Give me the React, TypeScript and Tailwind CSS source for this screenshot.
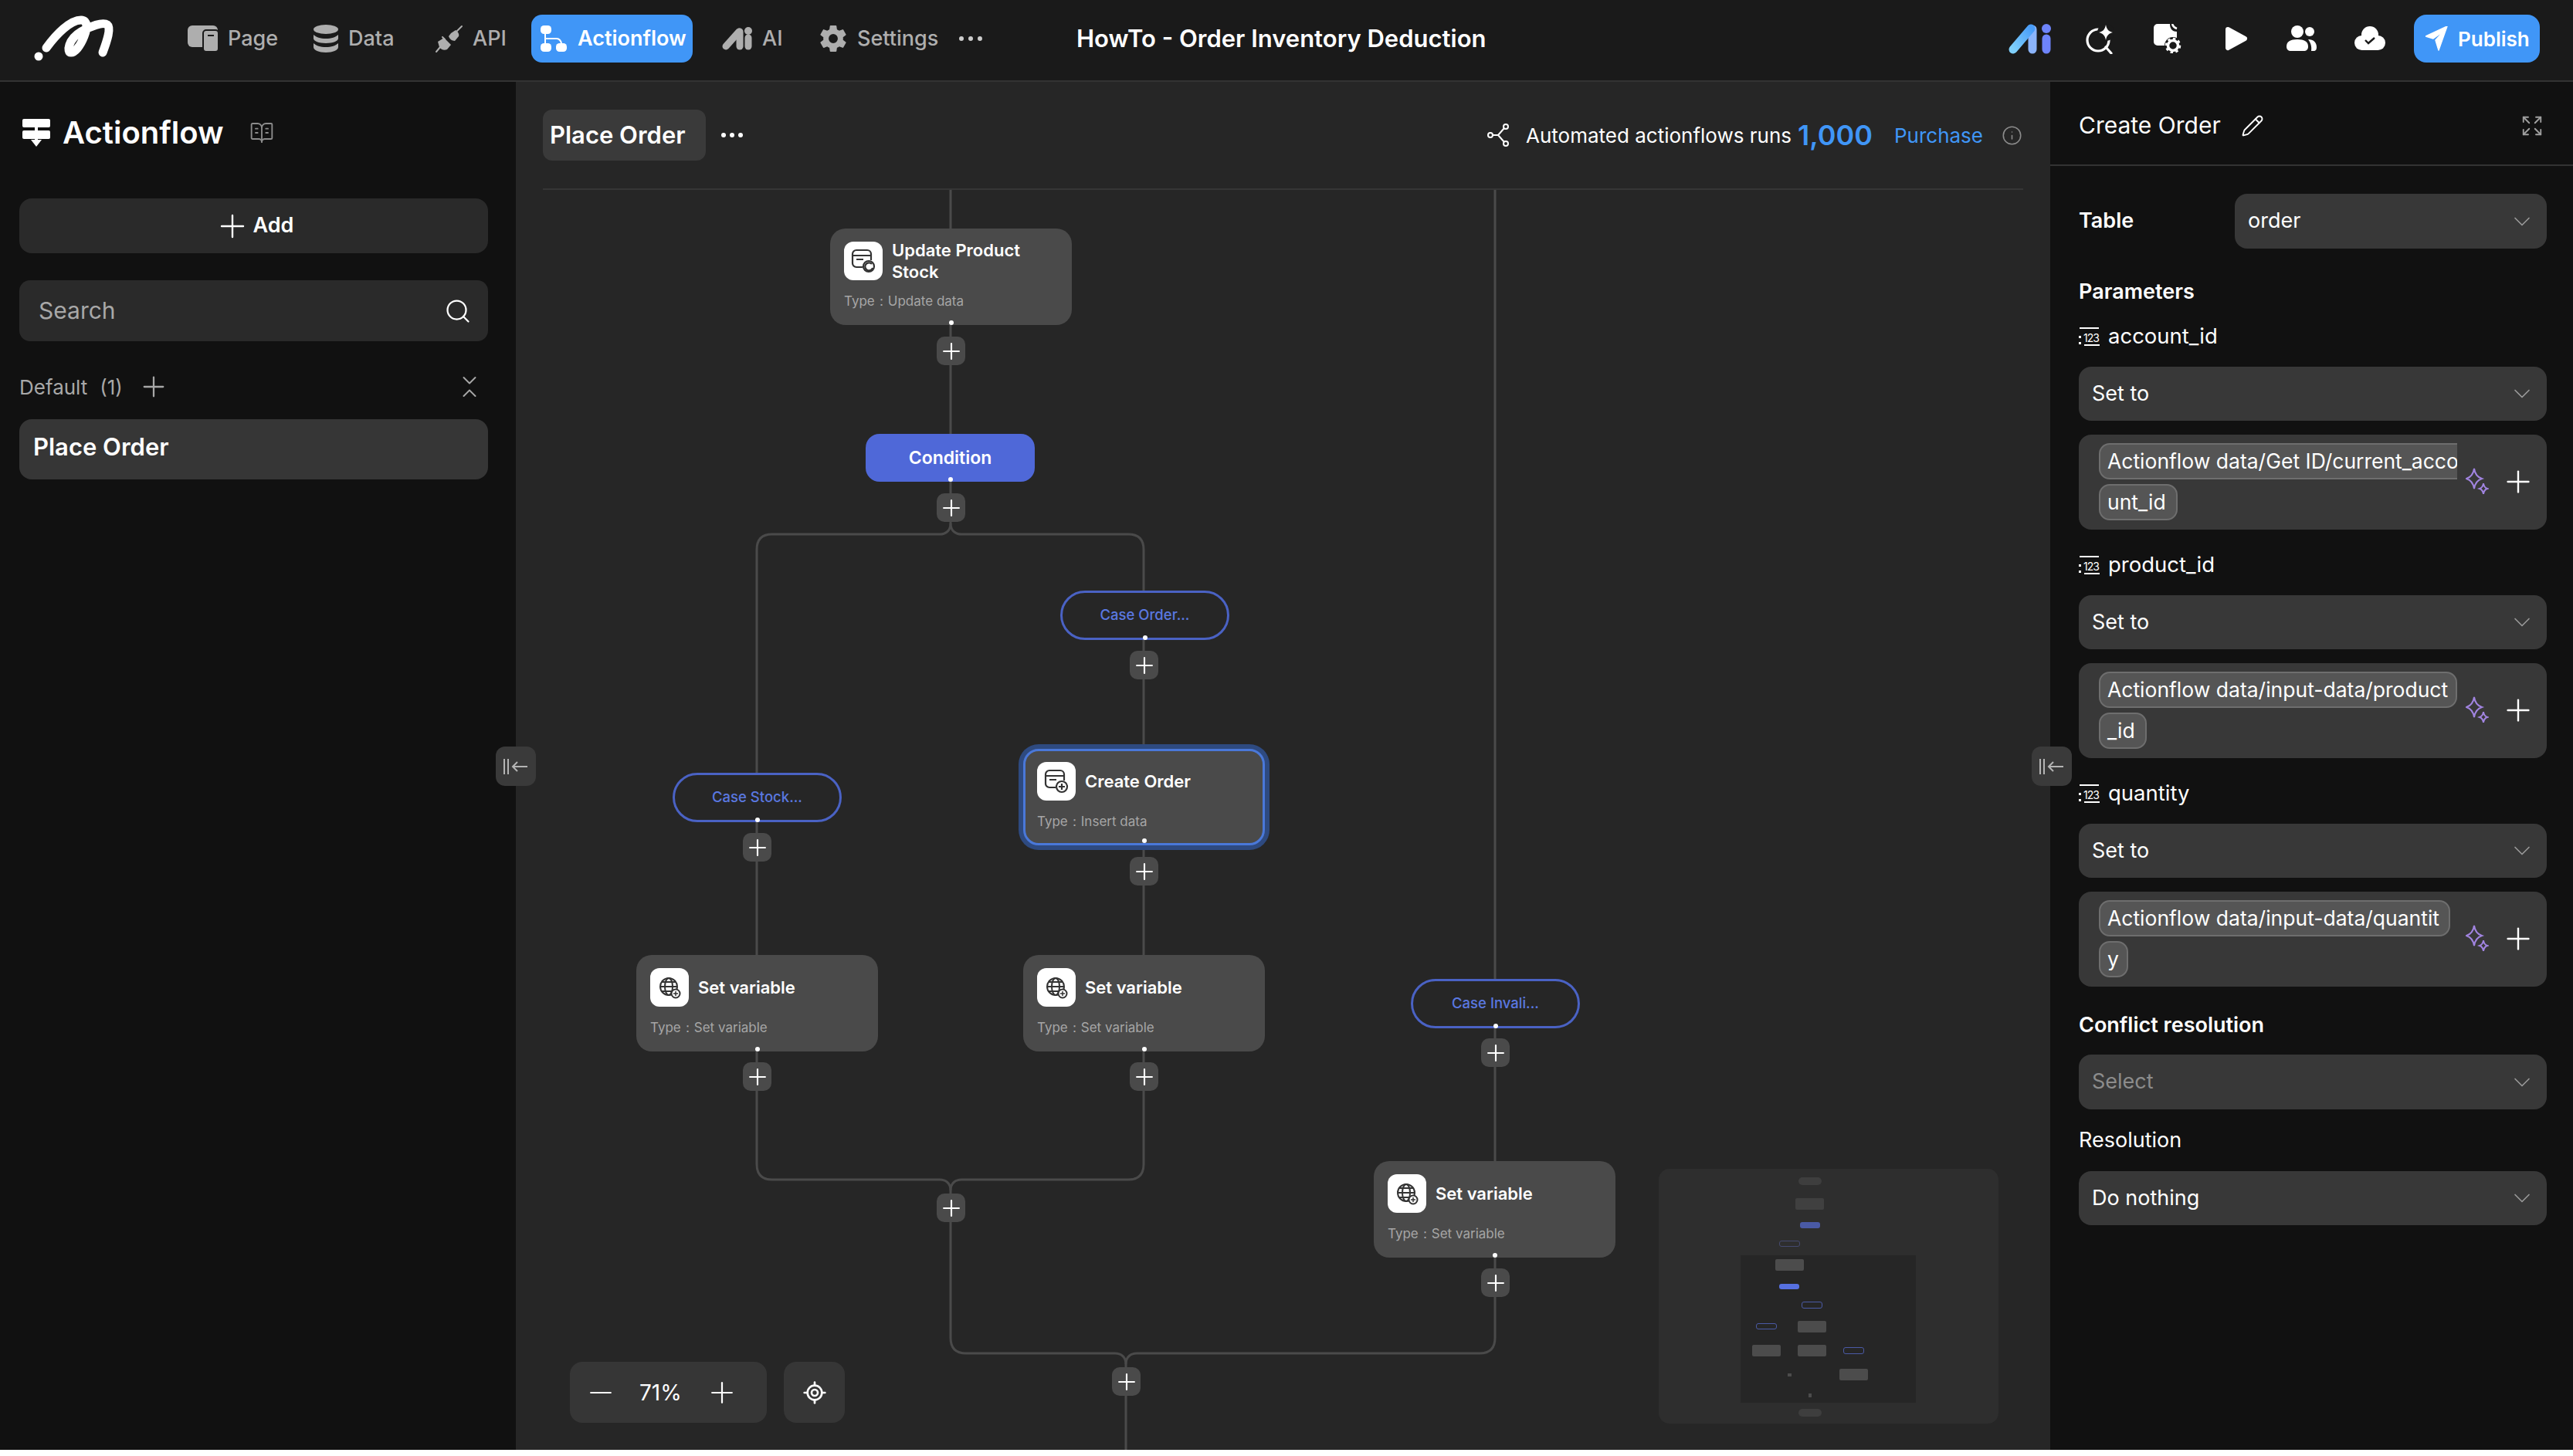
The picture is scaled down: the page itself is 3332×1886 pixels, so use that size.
import { BookOpenText, ChevronDown, ChevronsDownUp, Expand, Info, LocateFixed, Minus, Pencil, Plus, Search } from "lucide-react";
import { IoSettingsSharp } from "react-icons/io5";
import type { ReactNode } from "react";

const font = { fontFamily: "Inter, 'Noto Sans', sans-serif" };

function Logo() {
  return (
    <svg width="110" height="60" viewBox="40 20 110 60" fill="none">
      <circle cx="49" cy="73" r="5.5" fill="#fff" />
      <path
        d="M59 62C72 44 90 26 104 26C113 26 112 37 108 47C103 60 96 68 91 68C85 68 87 51 104 41C116 34 132 28 138 32C143 36 138 52 132 68"
        stroke="#fff"
        strokeWidth="11"
        strokeLinecap="round"
        strokeLinejoin="round"
      />
    </svg>
  );
}

function PageIcon() {
  return (
    <svg width="40" height="34" viewBox="0 0 40 34">
      <rect x="0" y="0" width="39" height="28" rx="6" fill="#aeaeae" />
      <rect x="20" y="6" width="20" height="28" rx="4" fill="#aeaeae" stroke="#1a1a1a" strokeWidth="2" />
      <rect x="26" y="12" width="8" height="2" fill="#1a1a1a" />
    </svg>
  );
}

function DataIcon() {
  return (
    <svg width="34" height="36" viewBox="0 0 34 36" fill="#aeaeae">
      <ellipse cx="17" cy="6" rx="16" ry="6" />
      <path d="M1 13c3 3 9 5 16 5s13-2 16-5v5c0 3-7 6-16 6S1 21 1 18z" />
      <path d="M1 24c3 3 9 5 16 5s13-2 16-5v5c0 4-7 7-16 7S1 33 1 29z" />
    </svg>
  );
}

function PlugIcon() {
  return (
    <svg width="36" height="36" viewBox="0 0 36 36" fill="#aeaeae">
      <path d="M20 11l6-4c3 2 5 5 4 8l-5 6c-4 0-7-3-8-6z" />
      <path d="M28 8l6-6" stroke="#aeaeae" strokeWidth="2" strokeLinecap="round" />
      <path d="M3 22l8-5 9 9-5 6c-4 2-8 0-10-3z" />
      <path d="M6 29l-5 6M9 16l3 3" stroke="#aeaeae" strokeWidth="2" strokeLinecap="round" />
    </svg>
  );
}

function FlowIcon() {
  return (
    <svg width="34" height="34" viewBox="0 0 34 34" fill="#fff">
      <rect x="0" y="0" width="14" height="11" rx="4.5" />
      <rect x="0" y="23" width="14" height="11" rx="4.5" />
      <rect x="20" y="23" width="14" height="11" rx="4.5" />
      <path d="M6 10v14M6 17h15c3 0 6 3 6 7" stroke="#fff" strokeWidth="2" fill="none" />
    </svg>
  );
}

function AiGrayIcon() {
  return (
    <svg width="40" height="30" viewBox="0 0 40 30">
      <path d="M5 25L22 6" stroke="#aeaeae" strokeWidth="9" strokeLinecap="round" />
      <path d="M23 6v19" stroke="#aeaeae" strokeWidth="9" strokeLinecap="round" />
      <circle cx="34" cy="5" r="5" fill="#aeaeae" />
      <path d="M34 14v11" stroke="#aeaeae" strokeWidth="9" strokeLinecap="round" />
    </svg>
  );
}

function AiColorIcon() {
  return (
    <svg width="55" height="40" viewBox="0 0 55 40">
      <defs>
        <linearGradient id="aiA" x1="0" y1="1" x2="1" y2="0">
          <stop offset="0" stopColor="#7fd0fb" />
          <stop offset="1" stopColor="#4a9df8" />
        </linearGradient>
      </defs>
      <path d="M31 8v26" stroke="#8bb4fb" strokeWidth="11" strokeLinecap="round" />
      <path d="M6 34L29 7" stroke="url(#aiA)" strokeWidth="11" strokeLinecap="round" />
      <circle cx="49" cy="7" r="6" fill="#6e84fb" />
      <path d="M49 20v14" stroke="#6e84fb" strokeWidth="11" strokeLinecap="round" />
    </svg>
  );
}

function AskIcon() {
  return (
    <svg width="38" height="40" viewBox="0 0 38 40" fill="none">
      <circle cx="17" cy="22" r="14" stroke="#fff" strokeWidth="3.2" />
      <path d="M27 31l7 8" stroke="#fff" strokeWidth="3.2" strokeLinecap="round" />
      <circle cx="27" cy="12" r="11" fill="#1a1a1a" />
      <path d="M27 2c1 6 4 9 9 10-5 1-8 4-9 10-1-6-4-9-9-10 5-1 8-4 9-10z" fill="#fff" />
    </svg>
  );
}

function FileGearIcon() {
  return (
    <svg width="36" height="38" viewBox="0 0 36 38">
      <path d="M5 0h16c0 7 4 10 9 10v18H5a5 5 0 0 1-5-5V5a5 5 0 0 1 5-5z" fill="#fff" />
      <path d="M24 0c1 3 3 5 6 6" stroke="#fff" strokeWidth="2.5" fill="none" />
      <circle cx="25" cy="28" r="11" fill="#1a1a1a" />
      <circle cx="25" cy="28" r="6.5" fill="none" stroke="#fff" strokeWidth="3.5" />
      <circle cx="25" cy="28" r="9" fill="none" stroke="#fff" strokeWidth="2.5" strokeDasharray="3.5 3.5" />
    </svg>
  );
}

function PlayIcon() {
  return (
    <svg width="30" height="32" viewBox="0 0 30 32">
      <path d="M4 4L26 16L4 28z" fill="#fff" stroke="#fff" strokeWidth="6" strokeLinejoin="round" />
    </svg>
  );
}

function UsersIcon() {
  return (
    <svg width="40" height="34" viewBox="0 0 40 34" fill="#fff">
      <circle cx="14" cy="8" r="8" />
      <circle cx="30" cy="8" r="6" />
      <path d="M0 27c0-6 5-9 14-9s14 3 14 9c0 4-2 6-6 6H6c-4 0-6-2-6-6z" />
      <path d="M28 18c7 0 11 4 11 10 0 3-1 5-4 5h-3c1-6-1-11-4-15z" />
    </svg>
  );
}

function CloudIcon() {
  return (
    <svg width="40" height="32" viewBox="0 0 40 32">
      <circle cx="20" cy="11" r="11" fill="#fff" />
      <rect x="0" y="12" width="40" height="19" rx="9.5" fill="#fff" />
      <path d="M14 18l4 4 8-7" fill="none" stroke="#1a1a1a" strokeWidth="2.4" />
    </svg>
  );
}

function SendIcon() {
  return (
    <svg width="30" height="32" viewBox="0 0 30 32" fill="#fff">
      <path d="M0 13L28 0 17 31 13 18 24 6 10 16z" stroke="#fff" strokeWidth="1.5" strokeLinejoin="round" />
    </svg>
  );
}

function NavItem({ icon, label, className }: { icon: ReactNode; label: string; className: string }) {
  return (
    <div className={`flex items-center gap-[12px] text-[27px] font-medium text-[#aeaeae] ${className}`}>
      {icon}
      <span>{label}</span>
    </div>
  );
}

function TopBar() {
  return (
    <header className="flex h-[106px] shrink-0 items-center border-b-2 border-[#333333] bg-[#1a1a1a] pb-[4px]">
      <div className="flex w-[1394px] shrink-0 items-center pl-[41px]">
        <div className="w-[202px] shrink-0">
          <Logo />
        </div>
        <NavItem icon={<PageIcon />} label="Page" className="w-[162px]" />
        <NavItem icon={<DataIcon />} label="Data" className="w-[159px]" />
        <NavItem icon={<PlugIcon />} label="API" className="w-[124px]" />
        <div className="mr-[38px] flex h-[62px] w-[209px] items-center gap-[14px] rounded-[14px] bg-[#4096f7] pl-[12px] text-[27px] font-semibold text-white">
          <FlowIcon />
          <span>Actionflow</span>
        </div>
        <NavItem icon={<AiGrayIcon />} label="AI" className="w-[125px]" />
        <NavItem icon={<IoSettingsSharp size={38} color="#aeaeae" />} label="Settings" className="w-[182px]" />
        <div className="flex gap-[6px]">
          <span className="h-[6px] w-[6px] rounded-full bg-[#cccccc]" />
          <span className="h-[6px] w-[6px] rounded-full bg-[#cccccc]" />
          <span className="h-[6px] w-[6px] rounded-full bg-[#cccccc]" />
        </div>
      </div>
      <div className="text-[31px] font-semibold whitespace-nowrap text-white">HowTo - Order Inventory Deduction</div>
      <div className="ml-auto flex items-center pr-[43px]">
        <div className="w-[99px]">
          <AiColorIcon />
        </div>
        <div className="w-[89px]">
          <AskIcon />
        </div>
        <div className="w-[92px]">
          <FileGearIcon />
        </div>
        <div className="w-[80px]">
          <PlayIcon />
        </div>
        <div className="w-[88px]">
          <UsersIcon />
        </div>
        <div className="w-[77px]">
          <CloudIcon />
        </div>
        <div className="flex h-[62px] w-[163px] items-center gap-[12px] rounded-[16px] bg-[#4096f7] pl-[15px] text-[26px] font-semibold text-white">
          <SendIcon />
          <span>Publish</span>
        </div>
      </div>
    </header>
  );
}

function ActionflowGlyph() {
  return (
    <svg width="36" height="36" viewBox="0 0 36 36" fill="#fff">
      <rect x="0" y="0" width="36" height="11" rx="2" />
      <rect x="0" y="15" width="36" height="11" rx="2" />
      <rect x="16" y="9" width="4" height="20" />
      <path d="M11 27h14l-7 9z" />
    </svg>
  );
}

function Sidebar() {
  return (
    <aside className="flex w-[668px] shrink-0 flex-col bg-[#111111] pl-[25px] pr-[36px]">
      <div className="mt-[44px] flex h-[44px] items-center pl-[4px]">
        <ActionflowGlyph />
        <span className="ml-[16px] text-[40px] font-semibold text-white">Actionflow</span>
        <BookOpenText size={32} strokeWidth={1.4} color="#8c8c8c" className="ml-[33px]" />
      </div>
      <div className="mt-[63px] flex h-[71px] items-center justify-center gap-[3px] rounded-[16px] bg-[#2a2a2a] text-[27px] font-semibold text-white">
        <Plus size={48} strokeWidth={1.2} />
        <span>Add</span>
      </div>
      <div className="mt-[35px] flex h-[79px] items-center justify-between rounded-[14px] bg-[#2a2a2a] pl-[25px] pr-[21px] text-[30px] text-[#a8a8a8]">
        <span>Search</span>
        <Search size={36} strokeWidth={1.5} color="#ffffff" />
      </div>
      <div className="mt-[38px] flex h-[42px] items-center text-[26px] text-[#a8a8a8]">
        <span>Default</span>
        <span className="ml-[16px]">(1)</span>
        <Plus size={42} strokeWidth={1.3} className="ml-[19px]" />
        <ChevronsDownUp size={36} strokeWidth={1.3} className="ml-auto mr-[6px]" />
      </div>
      <div className="mt-[21px] flex h-[78px] items-center rounded-[16px] bg-[#363636] pb-[6px] pl-[18px] text-[31px] font-semibold text-white">
        Place Order
      </div>
    </aside>
  );
}

function CardGlyph({ badge }: { badge: "update" | "add" | "globe" }) {
  if (badge === "globe") {
    return (
      <svg width="30" height="30" viewBox="0 0 30 30" fill="none" stroke="#333" strokeWidth="2">
        <circle cx="14" cy="14" r="11" />
        <ellipse cx="14" cy="14" rx="5" ry="11" />
        <path d="M3 14h22M5 8h18M5 20h18" />
        <circle cx="23" cy="23" r="5.5" fill="#fff" />
        <path d="M20 23h6M23 20v6" strokeWidth="1.5" />
      </svg>
    );
  }
  return (
    <svg width="32" height="32" viewBox="0 0 32 32" fill="none" stroke="#333" strokeWidth="2.2">
      <path d="M15 24H7a5 5 0 0 1-5-5V7a5 5 0 0 1 5-5h14a5 5 0 0 1 5 5v8" />
      <path d="M2 9h24M7 14h9" />
      <circle cx="23" cy="23" r="7" fill="#fff" />
      {badge === "add" ? <path d="M19 23h8M23 19v8" /> : <path d="M27 20a5 5 0 1 0 1 5" />}
    </svg>
  );
}

function FlowNode({
  title,
  type,
  badge,
  className,
  selected,
}: {
  title: string;
  type: string;
  badge: "update" | "add" | "globe";
  className: string;
  selected?: boolean;
}) {
  return (
    <div
      className={`absolute h-[125px] w-[313px] rounded-[20px] bg-[#4a4a4a] pr-[14px] ${className} ${
        selected ? "border-[3px] border-[#4a78d9] pl-[15px] shadow-[0_0_0_6px_#2e4a80]" : "pl-[18px]"
      }`}
    >
      <div className={`flex h-[50px] items-center gap-[12px] ${selected ? "mt-[14px]" : "mt-[17px]"}`}>
        <div className="flex h-[50px] w-[50px] shrink-0 items-center justify-center rounded-[12px] bg-white">
          <CardGlyph badge={badge} />
        </div>
        <div className="text-[22px] leading-[28px] font-semibold text-white">{title}</div>
      </div>
      <div className="mt-[15px] text-[17px] leading-[24px] text-[#a6a6a6]">Type：{type}</div>
      <span className="absolute bottom-[0px] left-1/2 h-[6px] w-[6px] -translate-x-1/2 rounded-full bg-white" />
    </div>
  );
}

function CasePill({ label, className }: { label: string; className: string }) {
  return (
    <div
      className={`absolute flex h-[64px] w-[219px] items-center justify-center rounded-full border-[3px] border-[#4a62c4] bg-[#262626] text-[18.5px] font-medium text-[#5a78e0] ${className}`}
    >
      {label}
      <span className="absolute bottom-[-3px] left-1/2 h-[6px] w-[6px] -translate-x-1/2 rounded-full bg-white" />
    </div>
  );
}

function AddDot({ className }: { className: string }) {
  return (
    <div className={`absolute flex h-[37px] w-[37px] items-center justify-center rounded-[10px] bg-[#4a4a4a] text-white ${className}`}>
      <Plus size={34} strokeWidth={1.5} />
    </div>
  );
}

const miniBlocks = [
  "left-[181px] top-[11px] h-[10px] w-[30px] rounded-full bg-[#3e3e3e]",
  "left-[177px] top-[38px] h-[15px] w-[37px] rounded-[2px] bg-[#404040]",
  "left-[183px] top-[69px] h-[8px] w-[26px] rounded-[3px] bg-[#4a5aa5]",
  "left-[156px] top-[93px] h-[8px] w-[27px] rounded-[3px] border border-[#454a6e]",
  "left-[151px] top-[117px] h-[15px] w-[37px] rounded-[2px] bg-[#4c4c4c]",
  "left-[156px] top-[149px] h-[7px] w-[26px] rounded-[3px] bg-[#5670e0]",
  "left-[185px] top-[172px] h-[9px] w-[27px] rounded-[3px] border border-[#4a5aa5]",
  "left-[126px] top-[200px] h-[8px] w-[27px] rounded-[3px] border border-[#4a5aa5]",
  "left-[180px] top-[197px] h-[15px] w-[37px] rounded-[2px] bg-[#4c4c4c]",
  "left-[121px] top-[228px] h-[15px] w-[37px] rounded-[2px] bg-[#4c4c4c]",
  "left-[180px] top-[228px] h-[15px] w-[37px] rounded-[2px] bg-[#4c4c4c]",
  "left-[239px] top-[231px] h-[9px] w-[27px] rounded-[3px] border border-[#4a5aa5]",
  "left-[234px] top-[259px] h-[15px] w-[37px] rounded-[2px] bg-[#4c4c4c]",
  "left-[167px] top-[265px] h-[4px] w-[5px] bg-[#4c4c4c]",
  "left-[194px] top-[291px] h-[5px] w-[4px] bg-[#4c4c4c]",
  "left-[181px] top-[311px] h-[10px] w-[30px] rounded-full bg-[#3e3e3e]",
];

function MiniMap() {
  return (
    <div className="absolute left-[1480px] top-[1408px] h-[330px] w-[440px] rounded-[14px] bg-[#2e2e2e]">
      <div className="absolute left-[106px] top-[112px] h-[191px] w-[227px] bg-[#262626]" />
      {miniBlocks.map((c) => (
        <div key={c} className={`absolute ${c}`} />
      ))}
    </div>
  );
}

function ShareGlyph() {
  return (
    <svg width="30" height="30" viewBox="0 0 30 30" fill="none" stroke="#fff" strokeWidth="2">
      <circle cx="4" cy="15" r="3" />
      <circle cx="24" cy="4" r="3" />
      <circle cx="24" cy="26" r="3" />
      <path d="M7 15h7M14 15l8-9M14 15l8 9" />
    </svg>
  );
}

function Canvas() {
  return (
    <main className="relative min-w-0 flex-1 overflow-hidden bg-[#262626]">
      <div className="mx-[35px] flex h-[140px] items-center border-b-2 border-[#363636]">
        <div className="flex h-[66px] w-[211px] items-center rounded-[12px] bg-[#3a3a3a] pl-[9px] text-[31px] font-semibold text-white">
          Place Order
        </div>
        <div className="ml-[20px] flex gap-[5px]">
          <span className="h-[6px] w-[6px] rounded-full bg-white" />
          <span className="h-[6px] w-[6px] rounded-full bg-white" />
          <span className="h-[6px] w-[6px] rounded-full bg-white" />
        </div>
        <div className="ml-auto flex items-center">
          <ShareGlyph />
          <span className="ml-[20px] text-[26px] text-white">Automated actionflows runs</span>
          <span className="ml-[8px] text-[36px] font-semibold text-[#4096f7]">1,000</span>
          <span className="ml-[28px] text-[26px] text-[#4096f7]">Purchase</span>
          <Info size={27} strokeWidth={1.4} color="#8c8c8c" className="ml-[24px] mr-[1px]" />
        </div>
      </div>

      <svg className="absolute left-0 top-0 h-[1772px] w-[1987px]" viewBox="0 0 1987 1772" fill="none" stroke="#4a4a4a" strokeWidth="3">
        <path d="M563 140V572" />
        <path d="M563 572C563 582 556 586 549 586H332Q312 586 312 606V1402Q312 1422 332 1422H549C556 1422 563 1426 563 1436" />
        <path d="M563 572C563 582 570 586 577 586H793Q813 586 813 606V1402Q813 1422 793 1422H577C570 1422 563 1426 563 1436" />
        <path d="M563 1436V1627Q563 1647 583 1647H776C783 1647 790 1651 790 1661" />
        <path d="M1268 140V1627Q1268 1647 1248 1647H804C797 1647 790 1651 790 1661V1772" />
      </svg>

      <FlowNode title="Update Product Stock" type="Update data" badge="update" className="left-[407px] top-[190px]" />
      <div className="absolute left-[453px] top-[456px] flex h-[62px] w-[219px] items-center justify-center rounded-[18px] bg-[#4f68d8] text-[23px] font-semibold text-white">
        Condition
        <span className="absolute bottom-[0px] left-1/2 h-[6px] w-[6px] -translate-x-1/2 rounded-full bg-white" />
      </div>
      <CasePill label="Case Order..." className="left-[705px] top-[659px]" />
      <CasePill label="Case Stock..." className="left-[203px] top-[895px]" />
      <CasePill label="Case Invali..." className="left-[1159px] top-[1162px]" />
      <FlowNode title="Create Order" type="Insert data" badge="add" selected className="left-[657px] top-[864px]" />
      <FlowNode title="Set variable" type="Set variable" badge="globe" className="left-[156px] top-[1131px]" />
      <FlowNode title="Set variable" type="Set variable" badge="globe" className="left-[657px] top-[1131px]" />
      <FlowNode title="Set variable" type="Set variable" badge="globe" className="left-[1111px] top-[1398px]" />

      <AddDot className="left-[545px] top-[330px]" />
      <AddDot className="left-[545px] top-[533px]" />
      <AddDot className="left-[795px] top-[737px]" />
      <AddDot className="left-[795px] top-[1004px]" />
      <AddDot className="left-[795px] top-[1270px]" />
      <AddDot className="left-[294px] top-[973px]" />
      <AddDot className="left-[294px] top-[1270px]" />
      <AddDot className="left-[545px] top-[1440px]" />
      <AddDot className="left-[1250px] top-[1239px]" />
      <AddDot className="left-[1250px] top-[1537px]" />
      <AddDot className="left-[772px] top-[1665px]" />

      <div className="absolute left-[70px] top-[1658px] flex h-[79px] w-[255px] items-center rounded-[16px] bg-[#363636] pl-[18px] text-white">
        <Minus size={44} strokeWidth={1.2} />
        <span className="ml-[28px] text-[28px]">71%</span>
        <Plus size={44} strokeWidth={1.2} className="ml-[30px]" />
      </div>
      <div className="absolute left-[347px] top-[1658px] flex h-[79px] w-[79px] items-center justify-center rounded-[16px] bg-[#363636] text-white">
        <LocateFixed size={32} strokeWidth={2} />
      </div>
      <MiniMap />
    </main>
  );
}

function SelectBox({ value, muted, className = "" }: { value: string; muted?: boolean; className?: string }) {
  return (
    <div
      className={`flex h-[71px] items-center justify-between rounded-[16px] bg-[#383838] pl-[17px] pr-[14px] text-[27px] ${
        muted ? "text-[#8c8c8c]" : "text-white"
      } ${className}`}
    >
      <span>{value}</span>
      <ChevronDown size={36} strokeWidth={1.1} color="#9a9a9a" />
    </div>
  );
}

function NumberGlyph() {
  return (
    <svg width="28" height="24" viewBox="0 0 28 24" fill="#fff">
      <rect x="1" y="0" width="25" height="2" />
      <rect x="0" y="11" width="3" height="3" />
      <rect x="0" y="19" width="3" height="3" />
      <text x="6" y="19" fontSize="14" fontFamily="Inter, sans-serif" letterSpacing="-1">
        123
      </text>
      <rect x="7" y="22" width="20" height="2" />
    </svg>
  );
}

function Sparkles() {
  return (
    <svg width="30" height="36" viewBox="0 0 30 36" fill="none" stroke="#a184e0" strokeWidth="2">
      <path d="M11 1c1 7 4 11 10 13-6 2-9 6-10 13C10 20 7 16 1 14 7 12 10 8 11 1z" />
      <path d="M23 20c.5 4 2 6 5 7-3 1-4.500 3-5 7-.5-4-2-6-5-7 3-1 4.500-3 5-7z" />
    </svg>
  );
}

function Tag({ text, className }: { text: string; className: string }) {
  return (
    <div
      className={`flex h-[47px] items-center overflow-hidden border-2 border-[#6e6e6e] bg-[#555555] pl-[9px] text-[26.5px] whitespace-nowrap text-white ${className}`}
    >
      {text}
    </div>
  );
}

function ParamBlock({
  name,
  first,
  rest,
  firstClass,
  restClass,
}: {
  name: string;
  first: string;
  rest: string;
  firstClass: string;
  restClass: string;
}) {
  return (
    <section className="mb-[28px]">
      <div className="flex h-[36px] items-center gap-[10px] text-[27.5px] text-white">
        <NumberGlyph />
        <span>{name}</span>
      </div>
      <SelectBox value="Set to" className="mt-[21px] !h-[70px]" />
      <div className="relative mt-[18px] h-[123px] rounded-[16px] bg-[#383838] pl-[26px] pt-[11px]">
        <Tag text={first} className={firstClass} />
        <Tag text={rest} className={`mt-[6px] ${restClass}`} />
        <div className="absolute right-[14px] top-[38px] flex items-center gap-[15px]">
          <Sparkles />
          <Plus size={46} strokeWidth={1.25} color="#fff" />
        </div>
      </div>
    </section>
  );
}

function RightPanel() {
  return (
    <aside className="flex w-[677px] shrink-0 flex-col bg-[#111111]">
      <div className="flex h-[109px] shrink-0 items-center border-b-2 border-[#333333] pl-[37px] pr-[38px] pt-[6px]">
        <span className="text-[30px] text-white">Create Order</span>
        <Pencil size={30} strokeWidth={1.5} color="#fff" className="ml-[26px]" />
        <Expand size={30} strokeWidth={1.5} color="#a0a0a0" className="ml-auto" />
      </div>
      <div className="pl-[37px] pr-[34px]">
        <div className="mt-[36px] flex items-center">
          <span className="w-[202px] text-[27px] font-semibold text-white">Table</span>
          <SelectBox value="order" className="flex-1" />
        </div>
        <div className="mb-[22px] mt-[38px] h-[36px] text-[27px] leading-[36px] font-semibold text-white">Parameters</div>
        <ParamBlock
          name="account_id"
          first="Actionflow data/Get ID/current_acco"
          rest="unt_id"
          firstClass="w-[464px] rounded-l-[14px] border-r-0"
          restClass="w-[102px] rounded-[14px]"
        />
        <ParamBlock
          name="product_id"
          first="Actionflow data/input-data/product"
          rest="_id"
          firstClass="w-[464px] rounded-[14px]"
          restClass="w-[62px] rounded-[14px]"
        />
        <ParamBlock
          name="quantity"
          first="Actionflow data/input-data/quantit"
          rest="y"
          firstClass="w-[455px] rounded-[14px]"
          restClass="w-[38px] rounded-[14px]"
        />
        <div className="mt-[32px] h-[36px] text-[27px] leading-[36px] font-semibold text-white">Conflict resolution</div>
        <SelectBox value="Select" muted className="mt-[20px]" />
        <div className="mt-[22px] h-[36px] text-[27px] leading-[36px] text-white">Resolution</div>
        <SelectBox value="Do nothing" className="mt-[22px] !h-[70px]" />
      </div>
    </aside>
  );
}

function CollapseHandle({ className }: { className: string }) {
  return (
    <div className={`absolute flex h-[51px] w-[52px] items-center justify-center rounded-[12px] bg-[#3a3a3a] ${className}`}>
      <svg width="34" height="26" viewBox="0 0 34 26" fill="none" stroke="#b4b4b4" strokeWidth="2">
        <path d="M2 3v20M7 3v20M32 13H13M19 7l-6 6 6 6" />
      </svg>
    </div>
  );
}

export default function App() {
  return (
    <div className="flex h-[1878px] w-[3332px] flex-col overflow-hidden" style={font}>
      <TopBar />
      <div className="relative flex min-h-0 flex-1">
        <Sidebar />
        <Canvas />
        <RightPanel />
        <CollapseHandle className="left-[642px] top-[861px]" />
        <CollapseHandle className="left-[2631px] top-[861px]" />
      </div>
    </div>
  );
}
